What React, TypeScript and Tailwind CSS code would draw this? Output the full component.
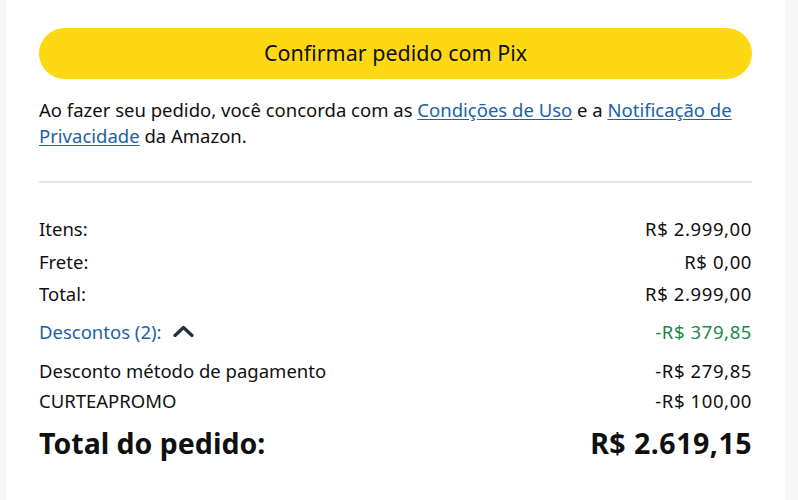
const rows = [
  { label: 'Itens:', value: 'R$ 2.999,00' },
  { label: 'Frete:', value: 'R$ 0,00' },
  { label: 'Total:', value: 'R$ 2.999,00' },
];

const discounts = [
  { label: 'Desconto método de pagamento', value: '-R$ 279,85' },
  { label: 'CURTEAPROMO', value: '-R$ 100,00' },
];

export default function App() {
  return (
    <div className="min-h-screen w-full bg-[#f7f7f7] flex font-['Noto_Sans',_'Open_Sans',_sans-serif] text-[#0f1111]">
      <div className="ml-[6px] w-[779px] min-h-screen bg-white px-[33px] pt-[28px]">
        {/* Place order button */}
        <button className="w-full h-[51px] rounded-full bg-[#ffd814] text-[21.5px] text-[#0f1111]">
          Confirmar pedido com Pix
        </button>

        {/* Terms */}
        <p className="mt-[18px] text-[18.5px] leading-[26px]">
          Ao fazer seu pedido, você concorda com as{' '}
          <a className="text-[#2162a1] underline underline-offset-2">Condições de Uso</a> e a{' '}
          <a className="text-[#2162a1] underline underline-offset-2">Notificação de Privacidade</a> da Amazon.
        </p>

        <div className="mt-[32px] h-[2px] bg-[#e3e6e6]" />

        {/* Order summary */}
        <div className="mt-[30px] flex flex-col text-[18.5px]">
          {rows.map((r) => (
            <div key={r.label} className="flex justify-between h-[32.5px] items-center">
              <span>{r.label}</span>
              <span className="tracking-[0.6px]">{r.value}</span>
            </div>
          ))}

          <div className="flex justify-between items-center h-[38px] mt-[2px]">
            <span className="flex items-center gap-[11px] text-[#2162a1]">
              Descontos (2):
              <svg width="21" height="12" viewBox="0 0 21 12" fill="none" className="-mt-[2px]">
                <polyline
                  points="2,10.5 10.5,2.5 19,10.5"
                  stroke="#232f3e"
                  strokeWidth="3.2"
                  strokeLinecap="round"
                  strokeLinejoin="round"
                />
              </svg>
            </span>
            <span className="text-[#188a4a] tracking-[0.6px]">-R$ 379,85</span>
          </div>

          <div className="mt-[5px]">
            {discounts.map((d) => (
              <div key={d.label} className="flex justify-between h-[30px] items-center">
                <span>{d.label}</span>
                <span className="tracking-[0.6px]">{d.value}</span>
              </div>
            ))}
          </div>

          <div className="flex justify-between items-center h-[50px] mt-[3px] text-[28.5px] font-bold">
            <span>Total do pedido:</span>
            <span className="tracking-[0.5px]">R$ 2.619,15</span>
          </div>
        </div>
      </div>
    </div>
  );
}
